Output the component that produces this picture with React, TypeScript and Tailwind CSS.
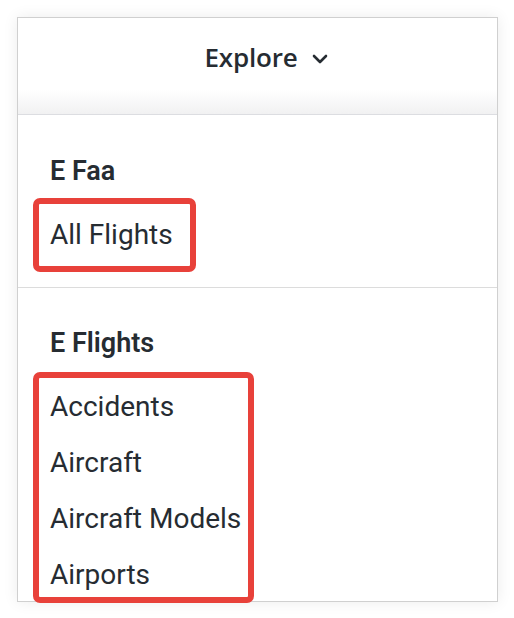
import React from "react";

const sections = [
  { title: "E Faa", items: ["All Flights"], box: "-top-[9px] -bottom-[9px] w-[163px]" },
  { title: "E Flights", items: ["Accidents", "Aircraft", "Aircraft Models", "Airports"], box: "-top-[7px] bottom-0 w-[221px]" },
];

export default function App() {
  return (
    <div className="w-[514px] h-[618px] bg-white pt-[17px] pl-[17px] font-['Roboto',sans-serif] text-[#262c32]">
      <div className="relative w-[481px] h-[585px] border border-[#d0d0d0] bg-white shadow-[0_0_14px_rgba(0,0,0,0.08)]">
        <div className="h-[97px] border-b border-[#dcdde1] bg-gradient-to-b from-white from-75% to-[#f1f1f2] flex items-center justify-center gap-[15px] pl-[18px] pb-[18px]">
          <span className="font-['Open_Sans',sans-serif] font-semibold text-[26px] tracking-[-0.2px]">Explore</span>
          <svg width="16" height="10" viewBox="0 0 16 10" className="mt-[4px]">
            <path d="M2 2l6 6 6-6" fill="none" stroke="#262c32" strokeWidth="2.6" strokeLinecap="round" strokeLinejoin="round" />
          </svg>
        </div>
        {sections.map((s, i) => (
          <div key={s.title} className={`pl-[32px] ${i === 0 ? "pt-[28px] pb-[24px] border-b border-[#dcdcdc]" : "pt-[27px]"}`}>
            <div className="h-[56px] leading-[56px] text-[27px] font-semibold mb-[8px]">{s.title}</div>
            <div className="relative">
              <div className={`absolute -left-[17px] ${s.box} border-[6px] border-[#e8413a] rounded-[7px] z-10`} />
              {s.items.map((it) => (
                <div key={it} className="h-[56px] leading-[56px] text-[28px]">{it}</div>
              ))}
            </div>
          </div>
        ))}
      </div>
    </div>
  );
}
